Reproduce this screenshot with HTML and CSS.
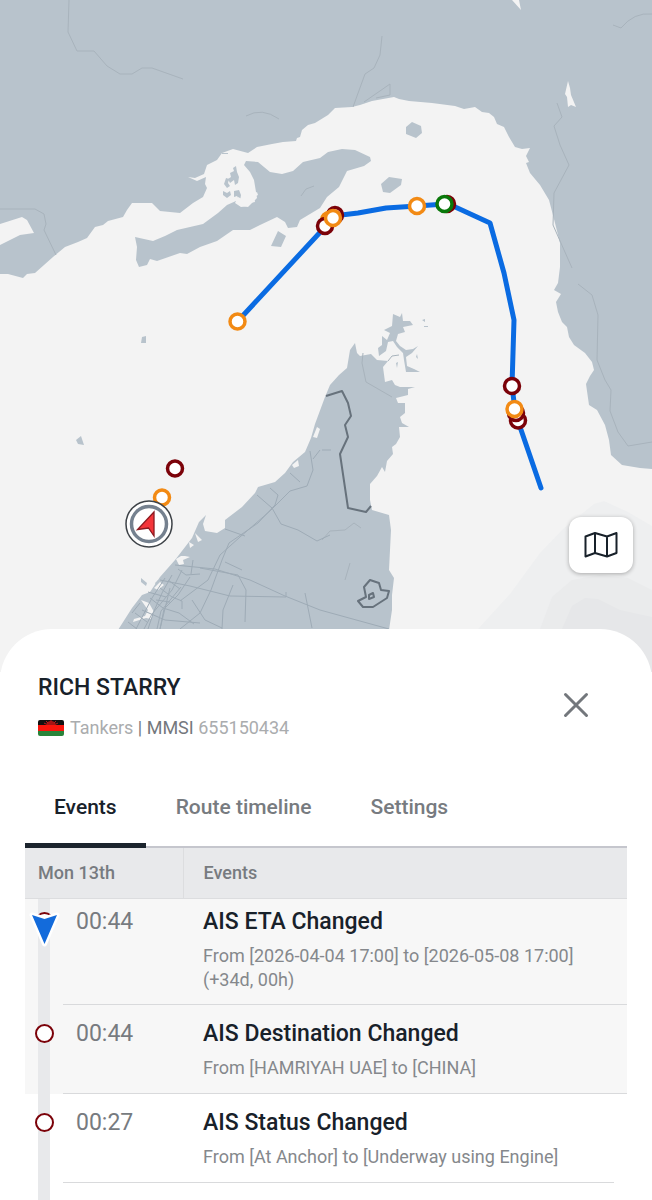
FILE: index.html
```
<!DOCTYPE html>
<html lang="en">

<head>
    <meta charset="UTF-8">
    <meta name="viewport" content="width=device-width, initial-scale=1">
    <title>RICH STARRY - Past track</title>
    <link rel="stylesheet" href="styles.css">
</head>

<body>
    <!-- map -->
    <section id="map">
        <svg class="chart" viewBox="0 0 652 680" preserveAspectRatio="xMidYMin slice" role="img" aria-label="Vessel track">
            <rect class="sea" width="652" height="680" />

            <!-- depth shading -->
            <path class="depth1" d="M478 629L510 594L540 553L563 529L594 504L604 501L628 512L652 526V680H470Z" />
            <path class="depth2" d="M540 629L552 597L572 580L600 575L628 578L652 590V680H536Z" />
            <path class="depth3" d="M562 629L572 606L585 598L598 599L620 610L652 617V680H560Z" />

            <!-- mainland north and east -->
            <path class="land" d="M0 0H652V469L640 468L622 465L611 455L609 440L605 425L597 410L589 405L586 384L590 376L594 370L592 362L585 353L574 345L569 337L567 327L562 322L558 312L556 302L561 294L554 290L558 283L560 267L560 243L555 223L549 200L540 185L530 173L526 163L529 162L526 156L530 148L522 149L515 147L509 137L504 127L497 124L494 117L489 113L482 112L475 107L464 109L455 106L432 103L409 101L399 99L394 97L372 101L360 105L352 107L335 108L328 115L315 123L308 125L302 130L300 137L297 138L296 141L283 142L272 144L257 147L248 153L233 149L222 153L217 160L207 165L204 174L195 178L188 177L197 181L206 177L205 184L207 188L203 197L193 203L180 213L160 211L152 203L132 203L127 210L123 217L108 221L103 225L95 227L87 238L78 242L65 247L53 257L35 273L27 274L23 278L8 274H0V245L20 235L34 233L27 220L22 217L0 224Z" />
            <path class="sea" d="M512 0L521 10L519 0ZM568 81L570 88L571 95L576 107L571 105L568 107L567 97L565 94Z" />

            <!-- islands -->
            <path class="land" d="M135 237L153 241L165 236L177 230L203 224L218 213L227 205L236 201L240 206L248 207L257 198L254 180L250 172L244 165L246 161L258 162L270 172L282 174L293 171L303 162L320 158L328 152L342 149L355 150L370 157L371 161L364 166L347 171L339 187L327 197L320 208L300 220L297 227L288 228L285 222L277 217L260 225L250 230L233 230L217 241L200 247L187 254L180 253L157 261L150 259L147 265L139 267L136 260L137 247Z" />
            <path class="land" d="M278 231L286 236L281 247L271 246ZM406 127L412 122L421 126L422 133L416 138L406 134ZM381 184L389 177L402 179L401 185L390 193L383 192ZM142 337L146 336V343H141ZM76 440L81 436L84 445L78 444Z" />
            <path class="land" d="M233 168l3-2 1 6 2 5-1 6-3 2-1-5-4 3-2-4 3-2-1-4 4-2zM226 178l3 1-1 4 2 3-3 2-3-4zM223 191l4 2 3-2 1 4-4 3-4-3zM234 191l5-1 2 5-1 6-3-5-3 1zM222 153h6v1h-6z" />
            <path class="sea" d="M235 203l3-6 4 2 5-4 2-4 2 4 6-3 1 3-4 2 1 5-5 1-3 3-6 1z" />

            <!-- peninsula -->
            <path class="land" d="M118 630L132 608L142 595L150 592L160 577L175 560L192 538L199 522L206 515L203 524L205 531L217 533L225 528L225 520L242 507L255 493L258 487L275 482L285 473L293 462L305 452L311 438L315 424L325 397L330 385L339 375L347 368L350 350L355 343L357 353L360 356L371 354L377 360L388 361L383 367L385 382L392 380L395 385L400 387L415 387L408 389V395L396 398L398 403L405 403L405 413L400 417L402 423L409 427L399 427L400 437L396 444L392 447L393 454L387 461L385 472L382 467L377 476L370 484L370 500L372 510L389 515L391 530L390 550L389 570L394 578L392 595L392 610L389 630Z" />
            <path class="land" d="M393 314L400 317L402 313L403 321L410 321L413 325L403 327L405 332L398 334L396 341L400 346L406 350L413 349L418 346L412 353L406 357L407 366L414 369L420 372L406 372L404 360L403 353L397 347L393 341L388 342L386 351L379 356L378 348L382 345V336L387 340L390 333L384 330L392 326ZM422 320l3-1v3zM424 326h4v1h-4zM417 354l1 5-2-2zM396 363l2-1-1 6z" />
            <path class="land" d="M141 578l6 5-1 3-5-4zM155 583l3-3 2 2-4 3z" />
            <path class="sea" d="M176 559l5-3 4 0 5 1-7 3 1 4-5 1zM189 542l5 3-4 3zM195 533l7 7-4 2zM154 588l6-6 4 3-6 5zM313 437l4-10 3 2-3 9zM292 465l6-5 1 6-5 2z" />
            <path class="sea" d="M141 600l8 3 5 9-3 7-5-1-13 4 1-3 11-3 3-6z" />

            <!-- inland roads and minor borders -->
            <path class="river" d="M69 0L68 32L77 51H94L107 66L120 74H132L142 68H152L183 79M246 116Q262 107 279 119M0 209H35L44 214L46 224L44 230L56 255M382 36L380 55L374 68L365 74L353 107M652 14Q634 12 621 28L613 25M557 103L562 117L554 126L560 145L569 165L554 193L553 225L572 268M578 284L592 295L598 315L597 360L605 380L611 390L610 411L618 432L628 446L652 442M364 102L390 84V95L376 98M301 196L306 189L314 186M363 353L362 363L366 382L392 397M388 361L392 356L399 355M322 540L330 531L345 530L354 523L361 528M350 563L345 580" />
            <path class="road" d="M175 565L215 569L250 580L285 596L320 610L389 629M290 473L300 482M310 451L313 470L307 486L290 491L270 511L240 537L220 555L208 580L180 601M270 488L278 495L275 505L258 523L229 543L222 560L211 590L200 613L180 629M322 450H331M313 459L320 450M257 495L272 508L281 524L298 530L317 541L330 535M225 529L245 536M160 580L190 586L230 596L286 597V592M178 569L186 575L200 574M225 562L242 570M200 568L238 575L246 590L245 622M305 593L312 628M192 600L205 620L222 628M233 585L223 610L222 629M170 588L160 629M142 610L165 620L200 623" />
            <path class="road" d="M135 613l12 9M128 622l9 7M150 598l13 10 16 5 15 11M165 578l-13 20-16 31M172 575l-10 18-8 18-6 18M182 570l-10 20-20 24-8 15M160 588l12 9 10 4v8M190 577l-12 18-14 14-4 20M193 560l-2 14M181 587l-20 24-4 18M156 600l14 2M148 592l18 5M168 580l12 9M140 603l-8 10" />
            <path class="border" d="M326 396L342 391L348 403L351 416L345 425L348 437L340 454L348 508L366 512L371 506M364 587L370 580L379 583L381 590L389 591L387 598L373 607L363 607L358 601L366 597ZM369 595l4-2 1 4-5 2z" />

            <!-- vessel track -->
            <polyline class="track" points="237,322 325,227 333,216 358,213 386,208 417,206 445,204 453,206 490,223 504,273 514,320 512,386 515,410 518,421 541,488" />

            <g class="points">
                <circle class="red" cx="335" cy="215" r="7.5" />
                <circle class="orange" cx="329" cy="220" r="7.5" />
                <circle class="red" cx="325" cy="226" r="7.5" />
                <circle class="orange" cx="333" cy="218" r="7.5" />
                <circle class="orange" cx="237.500" cy="321.500" r="7.5" />
                <circle class="orange" cx="417" cy="206" r="7.5" />
                <circle class="red" cx="447" cy="204" r="7.5" />
                <circle class="green" cx="444.500" cy="204" r="7.5" />
                <circle class="red" cx="512" cy="386" r="7.5" />
                <circle class="red" cx="518" cy="420.500" r="7.5" />
                <circle class="red" cx="516" cy="413" r="7.5" />
                <circle class="orange" cx="514.500" cy="409" r="7.5" />
                <circle class="red" cx="175" cy="468.500" r="7.5" />
                <circle class="orange" cx="162" cy="497.500" r="7.5" />
            </g>

            <!-- current position -->
            <circle cx="149" cy="524" r="23" fill="#fff" stroke="#3d4247" stroke-width="1.5" />
            <circle cx="149" cy="524" r="17.5" fill="#fff" stroke="#75818f" stroke-width="3.5" />
            <path d="M154 512V536L148.500 528L137.500 529.500Z" fill="#f4353a" stroke="#8c1a20" stroke-width="1.3" />
        </svg>

        <button class="layers" type="button" aria-label="Map layers">
            <svg width="34" height="28" viewBox="0 0 34 28">
                <path d="M1.500 5.500L11 2L23 5.500L32.500 2V22L23 25.500L11 22L1.500 25.500ZM11 2V22M23 5.500V25.500" />
            </svg>
        </button>
    </section>

    <!-- bottom sheet -->
    <main id="sheet">
        <header class="top">
            <div class="vessel">
                <h1>RICH STARRY</h1>
                <p>
                    <svg class="flag" width="26" height="16" viewBox="0 0 26 16" role="img" aria-label="Malawi">
                        <rect width="26" height="6" fill="#111" />
                        <rect y="5" width="26" height="6" fill="#f9160d" />
                        <rect y="11" width="26" height="5" fill="#29843a" />
                        <path d="M8 5a5 4 0 0 1 10 0z" fill="#a51414" />
                        <path d="M13 0v2M8 1l2 2M18 1l-2 2M6 3l2 1M20 3l-2 1" stroke="#c01818" />
                    </svg>
                    <span>Tankers <b>| MMSI</b> 655150434</span>
                </p>
            </div>
            <button class="close" type="button" aria-label="Close">
                <svg width="26" height="26" viewBox="0 0 26 26">
                    <path d="M2.500 2.500L23.500 23.500M23.500 2.500L2.500 23.500" />
                </svg>
            </button>
        </header>

        <nav class="tabs">
            <button class="on" type="button">Events</button>
            <button type="button">Route timeline</button>
            <button type="button">Settings</button>
        </nav>

        <table class="events">
            <thead>
                <tr>
                    <th class="day" scope="col">Mon 13th</th>
                    <th scope="col">Events</th>
                </tr>
            </thead>
            <tbody>
                <tr class="hl first">
                    <td class="time"><i class="dot"></i>
                        <svg class="pin" width="32" height="40" viewBox="0 0 32 40">
                            <path d="M4 6L16.500 10L29 6L16.500 35Z" fill="#136bdb" stroke="#fff" stroke-width="5" stroke-linejoin="round" paint-order="stroke" />
                        </svg>
                        <time>00:44</time></td>
                    <td class="info">
                        <h2>AIS ETA Changed</h2>
                        <p>From [2026-04-04 17:00] to [2026-05-08 17:00] (+34d, 00h)</p>
                    </td>
                </tr>
                <tr class="hl">
                    <td class="time"><i class="dot"></i><time>00:44</time></td>
                    <td class="info">
                        <h2>AIS Destination Changed</h2>
                        <p>From [HAMRIYAH UAE] to [CHINA]</p>
                    </td>
                </tr>
                <tr class="last">
                    <td class="time"><i class="dot"></i><time>00:27</time></td>
                    <td class="info">
                        <h2>AIS Status Changed</h2>
                        <p>From [At Anchor] to [Underway using Engine]</p>
                    </td>
                </tr>
                <tr class="next">
                    <td class="time"></td>
                    <td class="info"></td>
                </tr>
            </tbody>
        </table>
    </main>
</body>

</html>
```
FILE: styles.css
```
* {
    box-sizing: border-box;
}

html,
body,
h1,
h2,
p {
    margin: 0;
    padding: 0;
}

html,
body {
    height: 100%;
}

body {
    display: flex;
    flex-direction: column;
    overflow: hidden;
    background: #fff;
    color: #18212a;
    font-family: Roboto, "Noto Sans", sans-serif;
}

button {
    padding: 0;
    border: 0;
    background: none;
    font: inherit;
    cursor: pointer;
}

/* map */
#map {
    position: relative;
    flex: none;
    height: 56vh;
}

.chart {
    display: block;
    width: 100%;
    height: 100%;
}

.sea {
    fill: #f3f3f3;
}

.land {
    fill: #b8c3cc;
}

.depth1 {
    fill: #eeeff0;
}

.depth2 {
    fill: #eaebec;
}

.depth3 {
    fill: #e6e7e9;
}

.road,
.river {
    fill: none;
    stroke: #9eabb6;
    stroke-width: 1;
    stroke-linejoin: round;
}

.river {
    stroke: #a8b3bc;
}

.border {
    fill: none;
    stroke: #67727c;
    stroke-width: 2;
    stroke-linejoin: round;
}

.track {
    fill: none;
    stroke: #0a6be2;
    stroke-width: 5;
    stroke-linecap: round;
    stroke-linejoin: round;
}

.points circle {
    fill: #fff;
    stroke-width: 3.5;
}

.points .red {
    stroke: #7b0209;
}

.points .orange {
    stroke: #f28a14;
}

.points .green {
    stroke: #0a780a;
}

.layers {
    position: absolute;
    right: 19px;
    bottom: 99px;
    display: flex;
    align-items: center;
    justify-content: center;
    width: 64px;
    height: 56px;
    border-radius: 12px;
    background: #fff;
    box-shadow: 0 1px 4px rgba(0, 0, 0, .3);
}

.layers path {
    fill: none;
    stroke: #18212a;
    stroke-width: 2;
    stroke-linejoin: round;
}

/* bottom sheet */
#sheet {
    position: relative;
    flex: 1;
    margin-top: -43px;
    padding: 45px 25px 0;
    border-radius: 52px 52px 0 0;
    background: #fff;
}

.top {
    display: flex;
    align-items: center;
    justify-content: space-between;
    padding: 0 38px 0 13px;
}

.top h1 {
    font-size: 23px;
    line-height: 28px;
    font-weight: 500;
}

.top p {
    display: flex;
    align-items: center;
    gap: 6px;
    margin-top: 14px;
    color: #aaacae;
    font-size: 18px;
    line-height: 24px;
}

.top b {
    color: #74787d;
    font-weight: 400;
}

.flag {
    border-radius: 2px;
}

.close {
    display: flex;
    padding-bottom: 4px;
}

.close path {
    stroke: #73777c;
    stroke-width: 3;
    stroke-linecap: round;
}

/* tabs */
.tabs {
    display: flex;
    gap: 1px;
    margin-top: 37px;
    border-bottom: 2px solid #c5c6cd;
}

.tabs button {
    height: 71px;
    margin-bottom: -2px;
    padding: 0 29px 6px;
    border-bottom: 5px solid transparent;
    color: #777b80;
    font-size: 21px;
    font-weight: 500;
}

.tabs .on {
    border-bottom-color: #1b242d;
    color: #18212a;
}

/* event list */
.events {
    width: 100%;
    border-collapse: collapse;
    table-layout: fixed;
}

.events th {
    height: 50px;
    padding: 0 20px;
    border-bottom: 1px solid #dcdddf;
    background: #e8e9eb;
    color: #777b80;
    font-size: 18px;
    font-weight: 500;
    text-align: left;
}

.events .day {
    width: 158px;
    padding-left: 13px;
    border-right: 1px solid #dcdddf;
}

.events td {
    position: relative;
    padding: 13px 0 14px 20px;
    vertical-align: top;
}

.events .hl {
    background: #f7f7f7;
}

/* grey rail behind the dots */
.time {
    background: linear-gradient(#e8e9eb, #e8e9eb) 13px 0 / 12px 100% no-repeat;
}

/* row divider starts right of the rail */
.time::after,
.info::after {
    content: "";
    position: absolute;
    right: 0;
    bottom: 0;
    left: 0;
    height: 1px;
    background: #d9dadc;
}

.events .time::after {
    left: 38px;
}

.events .last .info::after {
    right: 13px;
}

.events .next td::after {
    display: none;
}

.events .time {
    padding-left: 51px;
    color: #777b80;
    font-size: 23px;
    line-height: 32px;
}

.events .first td {
    padding-top: 7px;
    padding-bottom: 13px;
}

.events h2 {
    font-size: 23px;
    line-height: 32px;
    font-weight: 500;
}

.events p {
    margin-top: 6px;
    padding-right: 20px;
    color: #85888c;
    font-size: 18px;
    line-height: 24px;
}

.dot {
    position: absolute;
    left: 10px;
    width: 19px;
    height: 19px;
    margin-top: 6px;
    border: 2px solid #7b0209;
    border-radius: 50%;
    background: #fff;
}

.pin {
    position: absolute;
    top: 10px;
    left: 3px;
}

.next {
    height: 20px;
}
```
